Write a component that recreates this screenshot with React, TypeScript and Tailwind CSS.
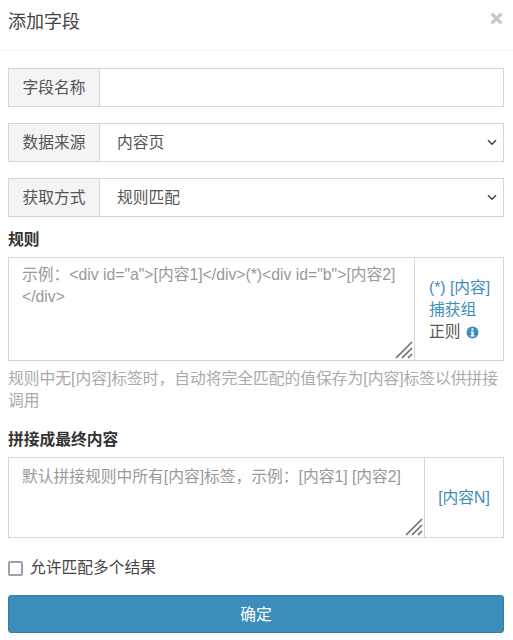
import React from "react";

const font = "font-['Liberation_Sans','Noto_Sans_CJK_SC',sans-serif]";

function Chevron() {
  return (
    <svg className="pointer-events-none absolute right-[7px] top-[16px] h-[7px] w-[10px]" viewBox="0 0 10 7" fill="none">
      <path d="M1 1.2 5 5.2 9 1.2" stroke="#444" strokeWidth="1.5" />
    </svg>
  );
}

function Grip() {
  return (
    <svg className="pointer-events-none absolute bottom-[2px] right-[2px] h-[18px] w-[18px]" viewBox="0 0 18 18" fill="none">
      <path d="M1 17 17 1M7 17 17 7M13 17 17 13" stroke="#707070" strokeWidth="1.7" />
    </svg>
  );
}

function Addon({ children }: { children: React.ReactNode }) {
  return (
    <div className="flex w-[92px] shrink-0 items-center justify-center border border-[#d2d6de] bg-[#f4f4f5] text-[#555]">
      {children}
    </div>
  );
}

function SelectRow({ label, value }: { label: string; value: string }) {
  return (
    <div className="flex h-[39px]">
      <Addon>{label}</Addon>
      <div className="relative -ml-px min-w-0 flex-1">
        <select
          defaultValue={value}
          className="h-full w-full appearance-none border border-[#d2d6de] bg-white pl-[17px] pt-[1px] text-[#555] outline-none"
        >
          <option>{value}</option>
        </select>
        <Chevron />
      </div>
    </div>
  );
}

export default function App() {
  return (
    <div className={`${font} h-[640px] w-[513px] overflow-hidden bg-white text-[15.75px] leading-[22px] text-[#333]`}>
      <header className="flex h-[51px] items-start justify-between border-b border-[#f4f4f4] pl-2 pr-[1px]">
        <h1 className="mt-[10px] text-[18px] leading-[25px] font-normal text-[#444]">添加字段</h1>
        <svg className="mr-[9px] mt-[12px] h-[13px] w-[13px]" viewBox="0 0 13 13">
          <path d="M1.6 1.6 11.4 11.4M11.4 1.6 1.6 11.4" stroke="#c9c9c9" strokeWidth="3.4" />
        </svg>
      </header>

      <main className="flex flex-col px-2 pr-[9px] pt-[17px]">
        <div className="flex flex-col gap-4">
          <div className="flex h-[39px]">
            <Addon>字段名称</Addon>
            <input className="-ml-px min-w-0 flex-1 border border-[#d2d6de] bg-white outline-none" />
          </div>
          <SelectRow label="数据来源" value="内容页" />
          <SelectRow label="获取方式" value="规则匹配" />
        </div>

        <label className="mt-[12px] block font-bold text-[#333]">规则</label>
        <div className="mt-[6px] flex h-[104px]">
          <div className="relative min-w-0 flex-1">
            <textarea
              readOnly
              placeholder={'示例：<div id="a">[内容1]</div>(*)<div id="b">[内容2]</div>'}
              className="block h-full w-full resize-none border border-[#d2d6de] bg-white px-[13px] pb-[5px] pt-[6px] text-[#555] outline-none placeholder:text-[#999]"
            />
            <Grip />
          </div>
          <div className="-ml-px flex w-[90px] shrink-0 flex-col justify-center border border-[#d2d6de] pl-[14px] pr-1 pt-[2px]">
            <a className="text-[#3c8dbc]">(*) [内容]</a>
            <a className="text-[#3c8dbc]">捕获组</a>
            <span className="flex items-center gap-[5px] text-[#555]">
              正则
              <svg className="h-[13px] w-[13px]" viewBox="0 0 13 13">
                <circle cx="6.5" cy="6.5" r="6" fill="#3c8dbc" />
                <rect x="5.4" y="2.4" width="2.2" height="2" fill="#fff" />
                <path d="M4.6 5.4H7.6V9.2H8.6V10.4H4.6V9.2H5.5V6.6H4.6Z" fill="#fff" />
              </svg>
            </span>
          </div>
        </div>
        <p className="mt-[7px] text-[#aaa]">规则中无[内容]标签时，自动将完全匹配的值保存为[内容]标签以供拼接调用</p>

        <label className="mt-[17px] block font-bold text-[#333]">拼接成最终内容</label>
        <div className="mt-[6px] flex h-[81px]">
          <div className="relative min-w-0 flex-1">
            <textarea
              readOnly
              placeholder="默认拼接规则中所有[内容]标签，示例：[内容1] [内容2]"
              className="block h-full w-full resize-none border border-[#d2d6de] bg-white px-[13px] pb-[5px] pt-[8px] text-[#555] outline-none placeholder:text-[#999]"
            />
            <Grip />
          </div>
          <div className="-ml-px flex w-[80px] shrink-0 items-center justify-center border border-[#d2d6de] text-[#3c8dbc]">
            [内容N]
          </div>
        </div>

        <label className="mt-[19px] flex items-center gap-[7px] text-[#444]">
          <span className="h-[15px] w-[15px] shrink-0 rounded-[2px] border-2 border-[#9d9dae] bg-white" />
          允许匹配多个结果
        </label>

        <button className="mt-[16px] h-[38px] w-full rounded-[3px] border border-[#367fa9] bg-[#3c8dbc] pt-[1px] text-white">
          确定
        </button>
      </main>
    </div>
  );
}
